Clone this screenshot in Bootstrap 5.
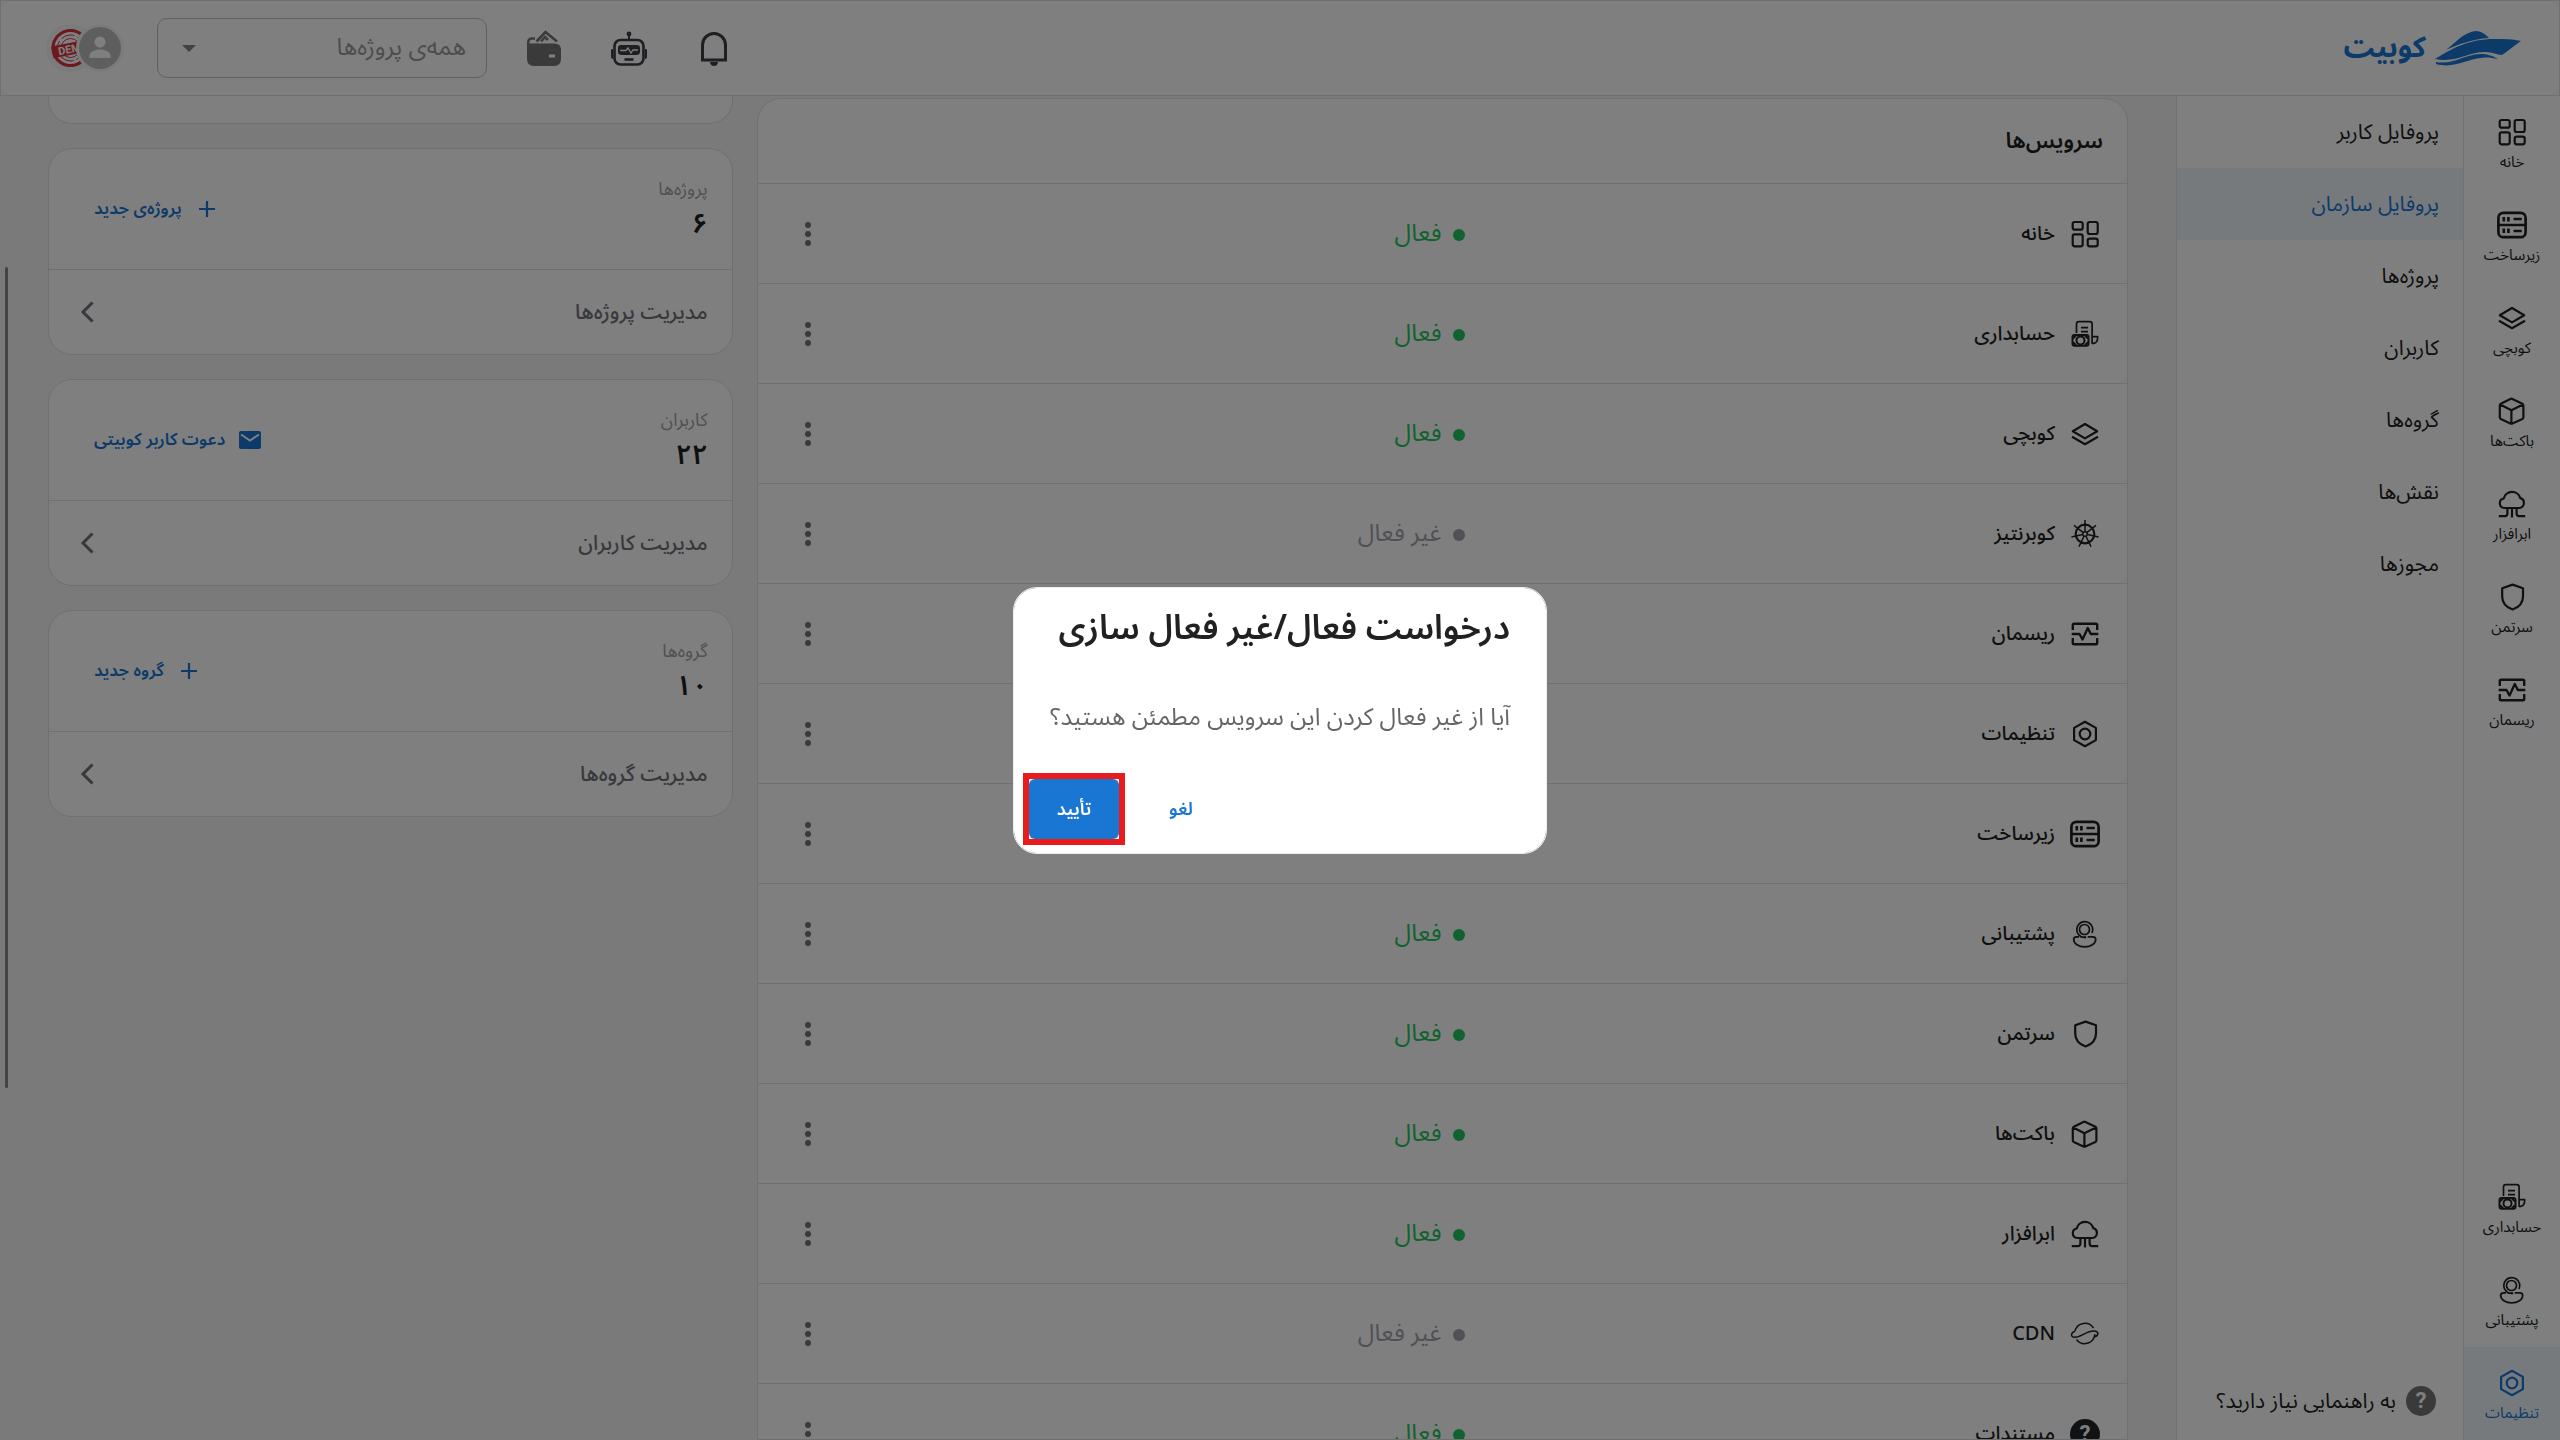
<!DOCTYPE html>
<html lang="fa" dir="rtl">
<head>
<meta charset="utf-8">
<meta name="viewport" content="width=device-width, initial-scale=1">
<title>کوبیت</title>
<link rel="stylesheet" href="https://cdn.jsdelivr.net/npm/bootstrap@5.3.0/dist/css/bootstrap.min.css">
<style>
:root{--ink:#212121;--blue:#1976d2;--line:#e0e0e0;--sel:#edf4fb}
body{font-family:"Noto Sans Arabic",Roboto,"DejaVu Sans",sans-serif;font-size:20px;line-height:30px;color:var(--ink);background:#f4f4f4}
a{text-decoration:none;color:inherit}
.ico{width:30px;height:30px;display:block;flex:none;fill:none;stroke:currentColor;stroke-width:2.2;stroke-linejoin:round}
.topbar{height:96px;border:1px solid var(--line);padding:0 38px 0 45px}
.brand{color:var(--blue);font-size:29px;font-weight:700;line-height:48px;gap:9px}
.brand svg{width:86px;height:36px;fill:currentColor}
.tools{gap:49px}
.tools svg{width:36px;height:36px;display:block}
.tool-btn{border:0;background:none;padding:0;color:#3c3c46}
.picker{width:330px;height:60px;border:1px solid #c0c0c0;border-radius:10px;font-size:24px;line-height:36px;color:#9a9a9a;padding:0 20px 0 50px;margin-left:33px;margin-right:-10px;
background:#fff url("data:image/svg+xml,%3Csvg xmlns='http://www.w3.org/2000/svg' width='14' height='7'%3E%3Cpath d='M0 0h14l-7 7z' fill='%23848484'/%3E%3C/svg%3E") no-repeat left 24px center/14px 7px}
.faces,.faces svg{width:78px;height:48px}
.rail{width:97px;border-inline-end:1px solid var(--line);font-size:15px;line-height:20px}
.rail a{height:93px;padding-top:21px;gap:5px}
.subnav{width:287px;border-inline-end:1px solid var(--line);font-size:21px}
.subnav .menu a{height:72px;padding:0 24px}
.chosen{background:var(--sel);color:var(--blue)}
.help{padding:0 27px 24px;gap:10px}
.qmark{width:30px;height:30px;border-radius:50%;background:#757575;color:#fff;font:700 22px/30px Roboto,sans-serif;text-align:center;flex:none}
.content-area{padding:0 48px;gap:24px;overflow:hidden}
.panel{background:#fff;border:1px solid var(--line);border-radius:24px}
.services{flex:2 1 0;margin-top:2px;overflow:hidden;border-radius:24px 24px 0 0}
.services h2{font-size:22px;font-weight:600;line-height:30px;padding:27px 24px;margin:0}
.services table{table-layout:fixed;width:100%;font-weight:500}
.services td{height:100px;border-top:1px solid var(--line);padding:0;vertical-align:middle}
.col-name{width:47%}.col-act{width:88px}
.svc{padding-right:27px;gap:15px}
.state{font-size:24px;line-height:36px;font-weight:400;color:#22c55e;padding-right:18px;gap:12px}
.state::before{content:"";width:12px;height:12px;border-radius:50%;background:currentColor;margin-top:2px}
.state.off{color:#a1a1aa}
.kebab{border:0;background:none;padding:0;width:36px;height:36px;display:block;margin:0 auto 0 32px;color:#757575}
.kebab svg{width:36px;height:36px;display:block;fill:currentColor}
.side{flex:1 1 0;gap:24px;display:flex;flex-direction:column}
.side .upper{height:120px;padding:0 24px 0 45px}
.side .lower{height:85px;padding:0 24px 0 28px;border-top:1px solid var(--line);color:#71717a;font-size:21px;font-weight:500}
.side .peek{height:28px;border-top:0;border-radius:0 0 24px 24px}
.tally{padding-top:8px}
.cap{font-size:18px;line-height:24px;color:#a1a1aa}
.total{font-size:28px;line-height:48px;font-weight:600}
.add{color:var(--blue);font-size:17px;line-height:24px;font-weight:600;gap:13px}
.add svg{width:24px;height:24px;display:block}
.lower svg{width:20px;height:26px;fill:none;stroke:currentColor;stroke-width:3}
.thumb{left:5px;top:267px;width:3px;height:57vh;background:#888;border-radius:2px}
.modal-dialog{max-width:534px}
.modal-content{border-radius:24px;border-color:#eee}
.ask-title{font-size:34px;line-height:52px;font-weight:600;padding:14px 36px 2px;margin:0}
.ask-text{font-size:24px;line-height:36px;color:#666;padding:44px 36px 43px;margin:0}
.ask-actions{padding:0 15px 14px;gap:17px}
.ask-actions .btn{width:90px;height:60px;font-size:18px;font-weight:600;line-height:24px;border-radius:6px;padding:0}
.btn-yes,.btn-yes:hover{background:var(--blue);color:#fff;border:0}
.btn-no{color:var(--blue);border:0}
.flagged{outline:6px solid #e81c1c}
</style>
<script src="https://cdn.jsdelivr.net/npm/bootstrap@5.3.0/dist/js/bootstrap.bundle.min.js"></script>
</head>
<body class="vh-100 overflow-hidden d-flex flex-column">
<svg class="d-none" aria-hidden="true">
<symbol id="i-home" viewBox="0 0 30 30"><rect x="2.7" y="3" width="10" height="7.7" rx="2"/><rect x="17.7" y="3" width="10" height="12" rx="2"/><rect x="2.7" y="15.3" width="10" height="12" rx="2"/><rect x="17.7" y="19.6" width="10" height="7.7" rx="2"/></symbol>
<symbol id="i-server" viewBox="0 0 30 30"><rect x="1.4" y="2.8" width="27.2" height="24.4" rx="5" stroke-width="2.7"/><path stroke-width="2.7" d="M1.5 15h27M6.8 7v4.4M11.4 7v4.4M16.5 9h8.3M6.8 18.6V23M11.4 18.6V23M16.5 21h8.3"/></symbol>
<symbol id="i-layers" viewBox="0 0 30 30"><path d="M15 5l12.2 7.2L15 19.4 2.8 12.2zM2 17.8l13 7.4 13-7.4"/></symbol>
<symbol id="i-box" viewBox="0 0 30 30"><path d="M13.4 2.9q1-.5 2 0l10 4.9q1 .6 1 1.8v11.6q0 1.2-1 1.8l-10 4.4q-1 .5-2 0l-9.600-4.400q-1-.6-1-1.800V9.600q0-1.200 1-1.800zM3.200 8.500l11.200 5.700 11.600-5.700M14.400 14.200v13.200"/></symbol>
<symbol id="i-cloud" viewBox="0 0 30 30"><path d="M7.300 19a4.800 4.800 0 0 1-.6-9.500 8.600 8.600 0 0 1 16.600-.4 5.100 5.100 0 0 1-.6 9.900zM15 19v9.500M10.400 19v5.600q0 2.600-2.600 2.600H1.800M19.600 19v5.600q0 2.600 2.600 2.600h6"/></symbol>
<symbol id="i-shield" viewBox="0 0 30 30"><path d="M15.600 2.600L26 6.200v8.300c0 6.500-4.600 11-10.400 13C9.800 25.500 5.200 21 5.200 14.500V6.200z"/></symbol>
<symbol id="i-pulse" viewBox="0 0 30 30"><path stroke-width="2.400" d="M2.800 11V6q0-1.300 1.300-1.300h21.800q1.300 0 1.300 1.300v5M2.800 19v5q0 1.300 1.300 1.300h21.800q1.300 0 1.300-1.300v-5M1.700 15h7.800l3 5.500L17.800 9l3 6h7.500"/></symbol>
<symbol id="i-bill" viewBox="0 0 30 30"><path stroke-width="1.700" d="M6.500 14V5q0-2.400 2.400-2.400h10.800q2.400 0 2.400 2.400v19.300h1.600q4-.3 4-6.600h-5.600M11 8.700h7M11 12.700h7"/><rect x="2.500" y="16" width="16" height="10.800" rx="2" stroke-width="2"/><circle cx="10.500" cy="21.400" r="4" stroke-width="2"/><path stroke-width="2" d="M3 19.500l3-3M3 23.300l3 3M18 19.500l-3-3M18 23.300l-3 3"/></symbol>
<symbol id="i-support" viewBox="0 0 30 30"><path stroke-width="1.700" d="M22 14A8 8 0 1 0 8.500 15.500l3 2.700h3M9 17.800H6.700q-3 0-3 2.600c0 4.400 5 7.400 11 7.400s11-3 11-7.400q0-2.600-3-2.600h-5"/><circle cx="14.500" cy="10.500" r="5" stroke-width="1.700"/><circle cx="15" cy="18.200" r="1.200" fill="currentColor" stroke="none"/></symbol>
<symbol id="i-gear" viewBox="0 0 30 30"><path d="M15 2.800l10.900 6.100v12.200L15 27.200 4.100 21.100V8.900z"/><circle cx="15" cy="15" r="5.300"/></symbol>
<symbol id="i-wheel" viewBox="0 0 30 30"><circle cx="15" cy="15" r="9.300"/><circle cx="15" cy="15" r="2.300" stroke-width="1.500"/><path stroke-width="1.500" d="M15 1v11.500M13 13.400L4 6.300M17 13.400l9-7.100M12.600 15.600L1.400 18.100M17.400 15.600l11.200 2.500M14 17.200L9 27.600M16 17.200l5 10.400"/></symbol>
<symbol id="i-planet" viewBox="0 0 30 30"><path stroke-width="1.500" d="M5 12A10.200 10.200 0 0 1 23.500 9M24.800 15.500A10.200 10.200 0 0 1 6.500 20.500M5 12.200c-4 1.200-4.800 5.600-1 6C11 19 15.500 12 24 12c5.500 0 4.500 5 .8 5.800v-2.600"/></symbol>
<symbol id="i-dots" viewBox="0 0 36 36"><circle cx="18" cy="9" r="3"/><circle cx="18" cy="18" r="3"/><circle cx="18" cy="27" r="3"/></symbol>
<symbol id="i-plus" viewBox="0 0 24 24"><path d="M12 4v16M4 12h16" stroke="currentColor" stroke-width="2.200" fill="none"/></symbol>
<symbol id="i-mail" viewBox="0 0 24 24"><path fill="currentColor" d="M3 3h18q2 0 2 2v14q0 2-2 2H3q-2 0-2-2V5q0-2 2-2z"/><path d="M3 6.500l9 6 9-6" stroke="#fff" stroke-width="2" fill="none"/></symbol>
<symbol id="i-next" viewBox="0 0 20 26"><path d="M15.500 3.500L6 13l9.500 9.500"/></symbol>
</svg>

<header class="topbar bg-white d-flex align-items-center justify-content-between flex-shrink-0">
  <a href="#" class="brand d-flex align-items-center">
    <svg viewBox="0 0 86 36"><path d="M11 20C20 13 29 2 41 1c6 0 10 4 13 7-16 1-30 6-43 12z"/><path d="M0 29C18 18 34 9 59 9c10 0 18 0 27 2-7 5-12 9-19 14-5 0-9-3-17-3-18 0-28 11-50 7z"/><path d="M1 32c18 3 27-7 44-8 8 0 13 2 18 5-6-1-10-2-17-1C32 29 19 39 1 34z"/></svg>
    <span>کوبیت</span>
  </a>
  <div class="tools d-flex align-items-center">
    <button class="tool-btn" aria-label="اعلان‌ها"><svg viewBox="0 0 36 36"><path d="M6.500 30V15a11.500 11.500 0 0 1 23 0v15z" fill="none" stroke="currentColor" stroke-width="3"/><path d="M14 32h8q-.5 4-4 4t-4-4z" fill="currentColor"/></svg></button>
    <button class="tool-btn" aria-label="دستیار"><svg viewBox="0 0 36 36"><rect x="3.500" y="10" width="29" height="24.500" rx="6" fill="none" stroke="currentColor" stroke-width="2.600"/><path d="M18 3v7" stroke="currentColor" stroke-width="2"/><circle cx="18" cy="4" r="2.400" fill="currentColor"/><path d="M0 20q0-1 2-1v10q-2 0-2-2zM36 20q0-1-2-1v10q2 0 2-2zM7 18q0-3 3-3h16q3 0 3 3v4q0 3-4 3H11q-4 0-4-3z" fill="currentColor"/><path d="M9 20.500h6l2-2.500 3 5 2-3h5" fill="none" stroke="#fff" stroke-width="1.300"/><path d="M13.500 29.500h9" stroke="currentColor" stroke-width="2.600"/></svg></button>
    <button class="tool-btn" aria-label="کیف پول"><svg viewBox="0 0 36 36" fill="#757575"><path fill-rule="evenodd" d="M1 13.500h27q7 0 7 6V29q0 7-7 7H8q-7 0-7-7zM23 24.500v3h6v-3z"/><path d="M2.200 14q-.5-5.500 3.500-5.500H9M10.500 11.500L19.500 2 31 11.500M15 11.500l5-5.500M20 10l2-2" fill="none" stroke="#757575" stroke-width="2.600"/></svg></button>
    <div class="d-flex align-items-center">
      <select class="picker form-select" aria-label="پروژه"><option>همه&zwnj;ی پروژه&zwnj;ها</option></select>
      <a href="#" class="faces d-block" aria-label="حساب کاربری">
        <svg viewBox="0 0 78 48"><circle cx="24" cy="24" r="24" fill="#f6f6f6"/><circle cx="24.500" cy="24" r="17.500" fill="#fff" stroke="#d8323c" stroke-width="3"/><circle cx="24.500" cy="24" r="13" fill="none" stroke="#d8323c" stroke-width="1" stroke-dasharray="14 3"/><circle cx="24.500" cy="24" r="9.500" fill="none" stroke="#d8323c" stroke-width="1"/><g transform="rotate(-11 24 25)"><rect x="6" y="19" width="37" height="12" fill="#d8323c"/><text x="12" y="29" direction="ltr" font-family="Roboto" font-weight="700" font-size="11" fill="#fff">DEM</text></g><circle cx="54" cy="24" r="24" fill="#f6f6f6"/><circle cx="54" cy="24" r="21" fill="#bdbdbd"/><circle cx="54" cy="18" r="5.500" fill="#fff"/><path d="M43.500 34v-2c0-4 5-6.500 10.500-6.500S64.500 28 64.500 32v2z" fill="#fff"/></svg>
      </a>
    </div>
  </div>
</header>

<div class="d-flex flex-grow-1 overflow-hidden position-relative">
  <nav class="rail bg-white d-flex flex-column flex-shrink-0">
    <a href="#" class="d-flex flex-column align-items-center"><svg class="ico"><use href="#i-home"/></svg>خانه</a>
    <a href="#" class="d-flex flex-column align-items-center"><svg class="ico"><use href="#i-server"/></svg>زیرساخت</a>
    <a href="#" class="d-flex flex-column align-items-center"><svg class="ico"><use href="#i-layers"/></svg>کوبچی</a>
    <a href="#" class="d-flex flex-column align-items-center"><svg class="ico"><use href="#i-box"/></svg>باکت&zwnj;ها</a>
    <a href="#" class="d-flex flex-column align-items-center"><svg class="ico"><use href="#i-cloud"/></svg>ابرافزار</a>
    <a href="#" class="d-flex flex-column align-items-center"><svg class="ico"><use href="#i-shield"/></svg>سرتمن</a>
    <a href="#" class="d-flex flex-column align-items-center"><svg class="ico"><use href="#i-pulse"/></svg>ریسمان</a>
    <div class="flex-grow-1"></div>
    <a href="#" class="d-flex flex-column align-items-center"><svg class="ico"><use href="#i-bill"/></svg>حسابداری</a>
    <a href="#" class="d-flex flex-column align-items-center"><svg class="ico"><use href="#i-support"/></svg>پشتیبانی</a>
    <a href="#" class="chosen d-flex flex-column align-items-center"><svg class="ico"><use href="#i-gear"/></svg>تنظیمات</a>
  </nav>
  <nav class="subnav bg-white d-flex flex-column justify-content-between flex-shrink-0">
    <div class="menu">
      <a href="#" class="d-flex align-items-center">پروفایل کاربر</a>
      <a href="#" class="chosen d-flex align-items-center">پروفایل سازمان</a>
      <a href="#" class="d-flex align-items-center">پروژه&zwnj;ها</a>
      <a href="#" class="d-flex align-items-center">کاربران</a>
      <a href="#" class="d-flex align-items-center">گروه&zwnj;ها</a>
      <a href="#" class="d-flex align-items-center">نقش&zwnj;ها</a>
      <a href="#" class="d-flex align-items-center">مجوزها</a>
    </div>
    <a href="#" class="help d-flex align-items-center"><span class="qmark">?</span>به راهنمایی نیاز دارید؟</a>
  </nav>

  <main class="content-area d-flex flex-grow-1">
    <section class="services panel">
      <h2>سرویس&zwnj;ها</h2>
      <table>
        <colgroup><col class="col-name"><col><col class="col-act"></colgroup>
        <tbody>
        <tr><td><div class="svc d-flex align-items-center"><svg class="ico"><use href="#i-home"/></svg>خانه</div></td><td><div class="state d-flex align-items-center">فعال</div></td><td><button class="kebab" aria-label="گزینه‌ها"><svg><use href="#i-dots"/></svg></button></td></tr>
        <tr><td><div class="svc d-flex align-items-center"><svg class="ico"><use href="#i-bill"/></svg>حسابداری</div></td><td><div class="state d-flex align-items-center">فعال</div></td><td><button class="kebab" aria-label="گزینه‌ها"><svg><use href="#i-dots"/></svg></button></td></tr>
        <tr><td><div class="svc d-flex align-items-center"><svg class="ico"><use href="#i-layers"/></svg>کوبچی</div></td><td><div class="state d-flex align-items-center">فعال</div></td><td><button class="kebab" aria-label="گزینه‌ها"><svg><use href="#i-dots"/></svg></button></td></tr>
        <tr><td><div class="svc d-flex align-items-center"><svg class="ico"><use href="#i-wheel"/></svg>کوبرنتیز</div></td><td><div class="state off d-flex align-items-center">غیر فعال</div></td><td><button class="kebab" aria-label="گزینه‌ها"><svg><use href="#i-dots"/></svg></button></td></tr>
        <tr><td><div class="svc d-flex align-items-center"><svg class="ico"><use href="#i-pulse"/></svg>ریسمان</div></td><td></td><td><button class="kebab" aria-label="گزینه‌ها"><svg><use href="#i-dots"/></svg></button></td></tr>
        <tr><td><div class="svc d-flex align-items-center"><svg class="ico"><use href="#i-gear"/></svg>تنظیمات</div></td><td></td><td><button class="kebab" aria-label="گزینه‌ها"><svg><use href="#i-dots"/></svg></button></td></tr>
        <tr><td><div class="svc d-flex align-items-center"><svg class="ico"><use href="#i-server"/></svg>زیرساخت</div></td><td></td><td><button class="kebab" aria-label="گزینه‌ها"><svg><use href="#i-dots"/></svg></button></td></tr>
        <tr><td><div class="svc d-flex align-items-center"><svg class="ico"><use href="#i-support"/></svg>پشتیبانی</div></td><td><div class="state d-flex align-items-center">فعال</div></td><td><button class="kebab" aria-label="گزینه‌ها"><svg><use href="#i-dots"/></svg></button></td></tr>
        <tr><td><div class="svc d-flex align-items-center"><svg class="ico"><use href="#i-shield"/></svg>سرتمن</div></td><td><div class="state d-flex align-items-center">فعال</div></td><td><button class="kebab" aria-label="گزینه‌ها"><svg><use href="#i-dots"/></svg></button></td></tr>
        <tr><td><div class="svc d-flex align-items-center"><svg class="ico"><use href="#i-box"/></svg>باکت&zwnj;ها</div></td><td><div class="state d-flex align-items-center">فعال</div></td><td><button class="kebab" aria-label="گزینه‌ها"><svg><use href="#i-dots"/></svg></button></td></tr>
        <tr><td><div class="svc d-flex align-items-center"><svg class="ico"><use href="#i-cloud"/></svg>ابرافزار</div></td><td><div class="state d-flex align-items-center">فعال</div></td><td><button class="kebab" aria-label="گزینه‌ها"><svg><use href="#i-dots"/></svg></button></td></tr>
        <tr><td><div class="svc d-flex align-items-center"><svg class="ico"><use href="#i-planet"/></svg>CDN</div></td><td><div class="state off d-flex align-items-center">غیر فعال</div></td><td><button class="kebab" aria-label="گزینه‌ها"><svg><use href="#i-dots"/></svg></button></td></tr>
        <tr><td><div class="svc d-flex align-items-center"><span class="qmark bg-dark">?</span>مستندات</div></td><td><div class="state d-flex align-items-center">فعال</div></td><td><button class="kebab" aria-label="گزینه‌ها"><svg><use href="#i-dots"/></svg></button></td></tr>
        </tbody>
      </table>
    </section>
    <aside class="side">
      <div class="panel peek"></div>
      <section class="panel">
        <div class="upper d-flex align-items-center justify-content-between">
          <div class="tally"><div class="cap">پروژه&zwnj;ها</div><div class="total">۶</div></div>
          <a href="#" class="add d-flex align-items-center"><svg><use href="#i-plus"/></svg>پروژه&zwnj;ی جدید</a>
        </div>
        <a href="#" class="lower d-flex align-items-center justify-content-between">مدیریت پروژه&zwnj;ها<svg><use href="#i-next"/></svg></a>
      </section>
      <section class="panel">
        <div class="upper d-flex align-items-center justify-content-between">
          <div class="tally"><div class="cap">کاربران</div><div class="total">۲۲</div></div>
          <a href="#" class="add d-flex align-items-center"><svg><use href="#i-mail"/></svg>دعوت کاربر کوبیتی</a>
        </div>
        <a href="#" class="lower d-flex align-items-center justify-content-between">مدیریت کاربران<svg><use href="#i-next"/></svg></a>
      </section>
      <section class="panel">
        <div class="upper d-flex align-items-center justify-content-between">
          <div class="tally"><div class="cap">گروه&zwnj;ها</div><div class="total">۱۰</div></div>
          <a href="#" class="add d-flex align-items-center"><svg><use href="#i-plus"/></svg>گروه جدید</a>
        </div>
        <a href="#" class="lower d-flex align-items-center justify-content-between">مدیریت گروه&zwnj;ها<svg><use href="#i-next"/></svg></a>
      </section>
    </aside>
  </main>
</div>
<div class="thumb position-fixed"></div>

<div class="modal-backdrop show"></div>
<div class="modal show d-block" role="dialog" aria-modal="true" aria-labelledby="ask">
  <div class="modal-dialog modal-dialog-centered">
    <div class="modal-content">
      <h1 class="ask-title" id="ask">درخواست فعال/غیر فعال سازی</h1>
      <p class="ask-text">آیا از غیر فعال کردن این سرویس مطمئن هستید؟</p>
      <div class="ask-actions d-flex justify-content-end">
        <button class="btn btn-no">لغو</button>
        <div class="flagged"><button class="btn btn-yes d-block">تأیید</button></div>
      </div>
    </div>
  </div>
</div>
</body>
</html>
